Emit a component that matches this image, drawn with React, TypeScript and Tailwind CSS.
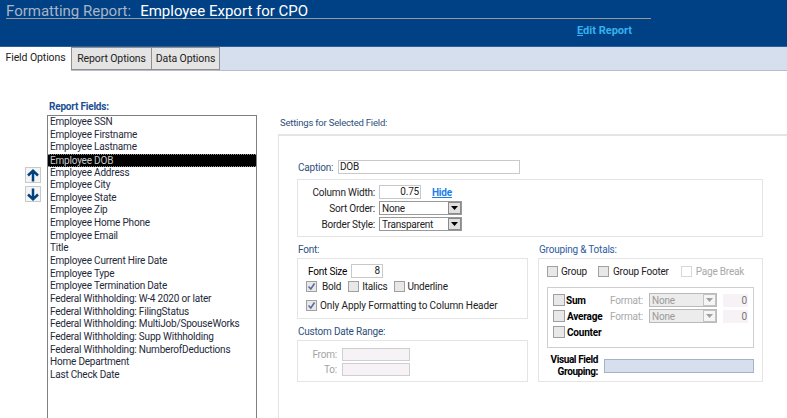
const fields = [
  "Employee SSN",
  "Employee Firstname",
  "Employee Lastname",
  "Employee DOB",
  "Employee Address",
  "Employee City",
  "Employee State",
  "Employee Zip",
  "Employee Home Phone",
  "Employee Email",
  "Title",
  "Employee Current Hire Date",
  "Employee Type",
  "Employee Termination Date",
  "Federal Withholding: W-4 2020 or later",
  "Federal Withholding: FilingStatus",
  "Federal Withholding: MultiJob/SpouseWorks",
  "Federal Withholding: Supp Withholding",
  "Federal Withholding: NumberofDeductions",
  "Home Department",
  "Last Check Date",
];

function CheckBox({ checked, disabled, big }: { checked?: boolean; disabled?: boolean; big?: boolean }) {
  return (
    <span
      className={`flex shrink-0 items-center justify-center border ${big ? "h-[12px] w-[12px]" : "h-[11px] w-[11px]"} ${
        disabled ? "border-[#d8d8d8] bg-white" : "border-[#a0a0a0] bg-[#e8e8e8]"
      }`}
    >
      {checked && (
        <svg width="9" height="9" viewBox="0 0 9 9" fill="none">
          <path d="M1.5 4.5L3.8 7L7.5 1.5" stroke="#5a6c9a" strokeWidth="1.6" />
        </svg>
      )}
    </span>
  );
}

function Select({ value, disabled, width }: { value: string; disabled?: boolean; width: string }) {
  return (
    <div
      className={`flex h-[14px] items-center justify-between border pl-[2px] ${width} ${
        disabled ? "border-[#b9b9b9] bg-[#ececec] text-[#9a9a9a]" : "border-[#999] bg-white text-[#222]"
      }`}
    >
      <span>{value}</span>
      <span
        className={`flex h-[12px] w-[13px] items-center justify-center border ${
          disabled ? "border-[#c4c4c4] bg-[#f5f5f5]" : "border-[#8a8a8a] bg-[#e0e0e0]"
        }`}
      >
        <svg width="7" height="4" viewBox="0 0 7 4">
          <polygon points="0,0 7,0 3.5,4" fill={disabled ? "#a0a0a0" : "#000"} />
        </svg>
      </span>
    </div>
  );
}

function MoveButton({ down }: { down?: boolean }) {
  return (
    <button className="flex h-[16px] w-[16px] items-center justify-center border border-[#c9c9c9] bg-[#f4f4f4]">
      <svg width="12" height="13" viewBox="0 0 12 13" fill="none">
        <path
          d={down ? "M6 0.5V11M1 6.5L6 11.2L11 6.5" : "M6 12.5V2M1 6.5L6 1.8L11 6.5"}
          stroke="#00417f"
          strokeWidth="2.5"
        />
      </svg>
    </button>
  );
}

export default function App() {
  return (
    <div className="flex h-[418px] w-[787px] flex-col overflow-hidden bg-white font-['Roboto',sans-serif] text-[10px] leading-[13px] tracking-[-0.2px] text-[#222]">
      <header className="h-[47px] shrink-0 border-b border-[#2a5f9c] bg-[#004185] pl-[6px] pt-[1px] tracking-normal">
        <div className="h-[18px] w-[645px] whitespace-nowrap border-b border-[#9a9a9a] text-[15px] leading-[20px]">
          <span className="text-[#a9b4c4]">Formatting Report:</span>
          <span className="ml-[9px] text-white">Employee Export for CPO</span>
        </div>
        <div className="mt-[5px] pl-[571px] text-[11px] font-bold text-[#35b1f0]">
          <span className="underline decoration-1">E</span>dit Report
        </div>
      </header>

      <nav className="flex h-[24px] shrink-0 border-b border-[#bbbcc9] bg-[#d6dfee] text-[10.5px] tracking-[-0.1px]">
        <div className="flex h-[24px] w-[71px] items-center justify-center whitespace-nowrap bg-white pb-[4px] text-[#222]">
          Field Options
        </div>
        <div className="flex h-[23px] w-[81px] items-center justify-center whitespace-nowrap border border-[#8f8f8f] bg-[#e4e4e4]">
          Report Options
        </div>
        <div className="flex h-[23px] w-[68px] items-center justify-center whitespace-nowrap border border-l-0 border-[#8f8f8f] bg-[#e4e4e4]">
          Data Options
        </div>
      </nav>

      <main className="flex min-h-0 flex-1">
        <div className="flex w-[278px] shrink-0 pl-[25px] pt-[30px]">
          <div className="mt-[66px] flex w-[22px] shrink-0 flex-col gap-[3px]">
            <MoveButton />
            <MoveButton down />
          </div>
          <div>
            <div className="ml-[2px] h-[14px] font-bold leading-[12px] text-[#1b4f93]">Report Fields:</div>
            <ul className="h-[320px] w-[210px] border border-[#7f7f7f] bg-white pl-[2px] text-[#1e2a3a]">
              {fields.map((f) => (
                <li
                  key={f}
                  className={`h-[12.65px] whitespace-nowrap leading-[12.65px] ${
                    f === "Employee DOB" ? "-ml-[2px] border-y border-dotted border-[#888] bg-black pl-[2px] leading-[10.5px] text-[#c9c9c9]" : ""
                  }`}
                >
                  {f}
                </li>
              ))}
            </ul>
          </div>
        </div>

        <section className="flex min-w-0 flex-1 flex-col">
          <div className="ml-[2px] mt-[45px] h-[18px] text-[9.5px] text-[#2e4f7c]">Settings for Selected Field:</div>
          <div className="flex-1 border-l border-t-2 border-[#e4e4e4] pl-[18px] pr-[24px]">
            <div className="mt-[24px] flex h-[14px] items-center pl-[1px]">
              <span className="w-[40px] text-[#2e4f7c]">Caption:</span>
              <div className="h-[14px] w-[182px] border border-[#c9c9c9] pl-[1px] leading-[12px]">DOB</div>
            </div>

            <div className="mt-[5px] h-[58px] border border-[#e4e4e4] pt-[4px]">
              <div className="flex h-[16px] items-center">
                <span className="w-[81px] pr-[4px] text-right">Column Width:</span>
                <div className="h-[14px] w-[42px] border border-[#c9c9c9] pr-[1px] text-right leading-[12px]">0.75</div>
                <a className="ml-[11px] font-bold text-[#1a7ee6] underline">Hide</a>
              </div>
              <div className="flex h-[16px] items-center">
                <span className="w-[81px] pr-[4px] text-right">Sort Order:</span>
                <Select value="None" width="w-[83px]" />
              </div>
              <div className="flex h-[16px] items-center">
                <span className="w-[81px] pr-[4px] text-right">Border Style:</span>
                <Select value="Transparent" width="w-[83px]" />
              </div>
            </div>

            <div className="mt-[5px] grid grid-cols-[231px_225px] gap-x-[10px]">
              <div>
                <div className="h-[16px] pl-[1px] pt-[1px] text-[#2e4f7c]">Font:</div>
                <div className="h-[61px] border border-[#e4e4e4] pl-[8px] pt-[5px]">
                  <div className="flex h-[14px] items-center">
                    <span className="w-[45px] whitespace-nowrap pl-[2px] text-black">Font Size</span>
                    <div className="h-[14px] w-[32px] border border-[#c9c9c9] pr-[2px] text-right leading-[12px]">8</div>
                  </div>
                  <div className="mt-[1px] flex h-[14px] items-center">
                    <CheckBox checked />
                    <span className="ml-[5px]">Bold</span>
                    <span className="ml-[7px]"><CheckBox /></span>
                    <span className="ml-[3px]">Italics</span>
                    <span className="ml-[6px]"><CheckBox /></span>
                    <span className="ml-[3px]">Underline</span>
                  </div>
                  <div className="mt-[5px] flex h-[14px] items-center">
                    <CheckBox checked />
                    <span className="ml-[3px] whitespace-nowrap tracking-[-0.1px]">Only Apply Formatting to Column Header</span>
                  </div>
                </div>
                <div className="mt-[6px] h-[15px] pl-[1px] text-[#2e4f7c]">Custom Date Range:</div>
                <div className="h-[42px] border border-[#e4e4e4] pt-[6px] text-[#a3a3a3]">
                  <div className="flex h-[14px] items-center">
                    <span className="w-[39px] text-right">From:</span>
                    <div className="ml-[5px] h-[13px] w-[68px] border border-[#cfcfcf] bg-[#f6f2f5]" />
                  </div>
                  <div className="mt-[1px] flex h-[14px] items-center">
                    <span className="w-[39px] text-right">To:</span>
                    <div className="ml-[5px] h-[13px] w-[68px] border border-[#cfcfcf] bg-[#f6f2f5]" />
                  </div>
                </div>
              </div>

              <div>
                <div className="h-[16px] pl-[1px] pt-[1px] text-[#2e5ca0]">Grouping &amp; Totals:</div>
                <div className="h-[124px] border border-[#e4e4e4] px-[8px] pt-[5px]">
                  <div className="flex h-[14px] items-center whitespace-nowrap">
                    <CheckBox />
                    <span className="ml-[3px]">Group</span>
                    <span className="ml-[11px]"><CheckBox /></span>
                    <span className="ml-[4px]">Group Footer</span>
                    <span className="ml-[12px]"><CheckBox disabled /></span>
                    <span className="ml-[4px] text-[#a8a8a8]">Page Break</span>
                  </div>
                  <div className="mt-[9px] h-[61px] w-[207px] border border-[#cfcfcf] pl-[5px] pt-[4px]">
                    <div className="flex h-[16px] items-center">
                      <CheckBox big />
                      <span className="ml-[1px] w-[44px] font-bold text-black">Sum</span>
                      <span className="w-[39px] text-[#a8a8a8]">Format:</span>
                      <Select value="None" disabled width="w-[68px]" />
                      <span className="ml-[6px] w-[25px] bg-[#f6f2f5] pr-[1px] text-right text-[#777]">0</span>
                    </div>
                    <div className="flex h-[16px] items-center">
                      <CheckBox big />
                      <span className="ml-[2px] w-[43px] whitespace-nowrap font-bold text-black">Average</span>
                      <span className="w-[39px] text-[#a8a8a8]">Format:</span>
                      <Select value="None" disabled width="w-[68px]" />
                      <span className="ml-[6px] w-[25px] bg-[#f6f2f5] pr-[1px] text-right text-[#777]">0</span>
                    </div>
                    <div className="flex h-[16px] items-center">
                      <CheckBox big />
                      <span className="ml-[2px] font-bold text-black">Counter</span>
                    </div>
                  </div>
                  <div className="mt-[6px] flex items-center">
                    <span className="w-[51px] whitespace-nowrap text-right font-bold leading-[12px] tracking-[-0.4px] text-black">
                      Visual Field
                      <br />
                      Grouping:
                    </span>
                    <div className="ml-[6px] h-[14px] w-[150px] border border-[#a9b1c4] bg-[#d6dfee]" />
                  </div>
                </div>
              </div>
            </div>
          </div>
        </section>
      </main>
    </div>
  );
}
